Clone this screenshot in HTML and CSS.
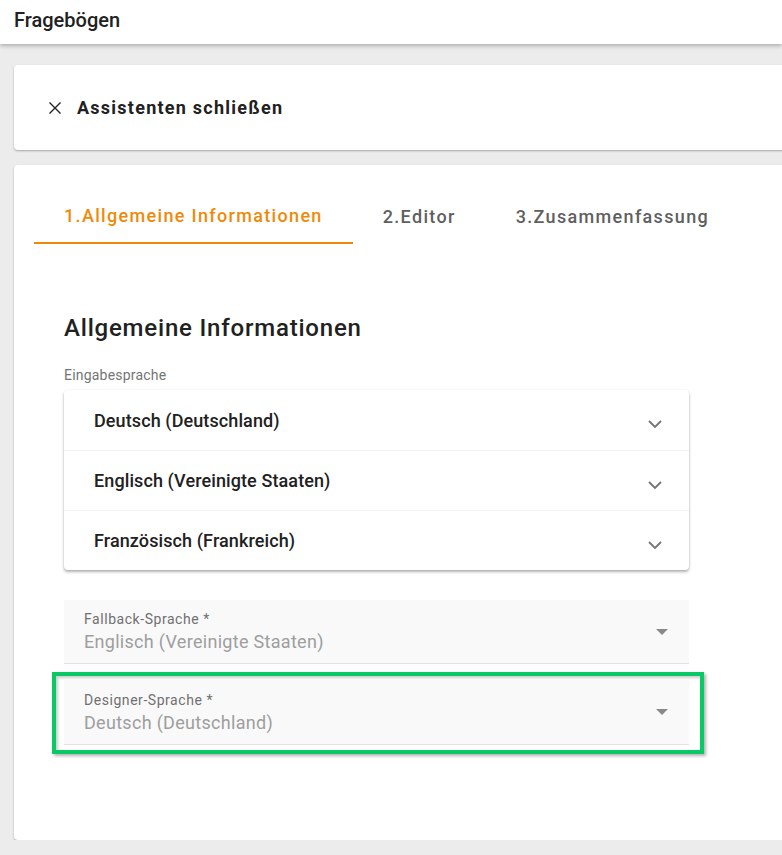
FILE: index.html
```html
<!DOCTYPE html>
<html lang="de">

<head>
  <meta charset="UTF-8">
  <meta name="viewport" content="width=device-width, initial-scale=1.0">
  <title>Fragebögen</title>
  <link rel="stylesheet" href="styles.css">
</head>

<body>
  <header class="topbar">Fragebögen</header>

  <main class="page">
    <div class="card close-card">
      <svg class="close-icon" width="14" height="14" viewBox="0 0 14 14">
        <path d="M1.5 1.5 L12.5 12.5 M12.5 1.5 L1.5 12.5" stroke="#222" stroke-width="1.4" fill="none" />
      </svg>
      <span class="close-text">Assistenten schließen</span>
    </div>

    <div class="card wizard">
      <div class="tab-header">
        <span class="tab-item active">1.Allgemeine Informationen</span>
        <span class="tab-item">2.Editor</span>
        <span class="tab-item">3.Zusammenfassung</span>
      </div>

      <div class="tab-panel">
        <h2 class="title">Allgemeine Informationen</h2>
        <div class="small-label">Eingabesprache</div>

        <div class="panels">
          <div class="panel-row">
            <span>Deutsch (Deutschland)</span>
            <svg class="chevron" width="14" height="8" viewBox="0 0 14 8">
              <path d="M1 1 L7 7 L13 1" stroke="#757575" stroke-width="1.8" fill="none" />
            </svg>
          </div>
          <div class="panel-row">
            <span>Englisch (Vereinigte Staaten)</span>
            <svg class="chevron" width="14" height="8" viewBox="0 0 14 8">
              <path d="M1 1 L7 7 L13 1" stroke="#757575" stroke-width="1.8" fill="none" />
            </svg>
          </div>
          <div class="panel-row">
            <span>Französisch (Frankreich)</span>
            <svg class="chevron" width="14" height="8" viewBox="0 0 14 8">
              <path d="M1 1 L7 7 L13 1" stroke="#757575" stroke-width="1.8" fill="none" />
            </svg>
          </div>
        </div>

        <div class="select-field">
          <div class="select-text">
            <span class="select-label">Fallback-Sprache *</span>
            <span class="select-value">Englisch (Vereinigte Staaten)</span>
          </div>
          <span class="arrow"></span>
        </div>

        <div class="highlight">
          <div class="select-field">
            <div class="select-text">
              <span class="select-label">Designer-Sprache *</span>
              <span class="select-value">Deutsch (Deutschland)</span>
            </div>
            <span class="arrow"></span>
          </div>
        </div>
      </div>
    </div>
  </main>
</body>

</html>
```

FILE: styles.css
```css
body {
  margin: 0;
  background: #ececec;
  font-family: Roboto, "Liberation Sans", sans-serif;
  color: #212121;
  overflow: hidden;
}

.topbar {
  height: 44px;
  background: #fff;
  padding-left: 14px;
  font-size: 20px;
  font-weight: 500;
  line-height: 40px;
  box-shadow: 0 2px 4px rgba(0, 0, 0, .25);
  position: relative;
}

.page {
  padding: 21px 0 0 14px;
}

.card {
  background: #fff;
  border-radius: 4px;
  margin-right: -20px;
  box-shadow: 0 1px 2px rgba(0, 0, 0, .3);
}

.close-card {
  height: 85px;
  display: flex;
  align-items: center;
  padding-left: 34px;
  gap: 15px;
}

.close-text {
  font-size: 18px;
  font-weight: 700;
  letter-spacing: 1.25px;
}

.wizard {
  margin-top: 15px;
  padding: 21px 20px 86px;
}

.tab-header {
  display: flex;
  height: 58px;
}

.tab-item {
  padding: 4px 30px 0;
  line-height: 54px;
  font-size: 18px;
  font-weight: 500;
  letter-spacing: 1.33px;
  color: #5f5f5f;
  box-sizing: border-box;
}

.tab-item.active {
  color: #ef8a09;
  border-bottom: 2px solid #ef8a09;
  line-height: 52px;
}

.tab-panel {
  padding: 0 30px;
  width: 625px;
}

.title {
  margin: 70px 0 0;
  font-size: 24px;
  font-weight: 500;
  letter-spacing: .8px;
  line-height: 28px;
}

.small-label {
  margin-top: 24px;
  font-size: 14px;
  letter-spacing: .2px;
  color: #757575;
  line-height: 18px;
}

.panels {
  margin-top: 6px;
  border-radius: 4px;
  box-shadow: 0 2px 3px rgba(0, 0, 0, .3), 0 0 2px rgba(0, 0, 0, .08);
  overflow: hidden;
}

.panel-row {
  height: 60px;
  display: flex;
  align-items: center;
  justify-content: space-between;
  padding: 0 27px 0 30px;
  font-size: 18px;
  font-weight: 500;
  letter-spacing: .1px;
  border-top: 1px solid #f4f4f4;
  box-sizing: border-box;
}

.panel-row:first-child {
  border-top: none;
}

.chevron {
  margin-top: 8px;
}

.select-field {
  margin-top: 30px;
  height: 64px;
  background: #f9f9f9;
  border-bottom: 1px solid #e2e2e2;
  display: flex;
  align-items: center;
  justify-content: space-between;
  padding: 0 21px 0 20px;
  box-sizing: border-box;
}

.select-text {
  display: flex;
  flex-direction: column;
}

.select-label {
  font-size: 14px;
  color: #707070;
  letter-spacing: .55px;
  line-height: 18px;
  margin-top: 1px;
}

.select-value {
  font-size: 18px;
  color: #9e9e9e;
  letter-spacing: .3px;
  line-height: 24px;
  margin-top: 2px;
}

.arrow {
  width: 0;
  height: 0;
  border-left: 6px solid transparent;
  border-right: 6px solid transparent;
  border-top: 6px solid #8a8a8a;
}

.highlight {
  margin: 8px -15px 0 -12px;
  border: 4px solid #0ac865;
  padding: 4px 11px 5px 8px;
  box-shadow: 2px 2px 3px rgba(0, 0, 0, .3), inset 2px 2px 3px rgba(0, 0, 0, .2);
}

.highlight .select-field {
  margin-top: 0;
  height: 65px;
}
```
